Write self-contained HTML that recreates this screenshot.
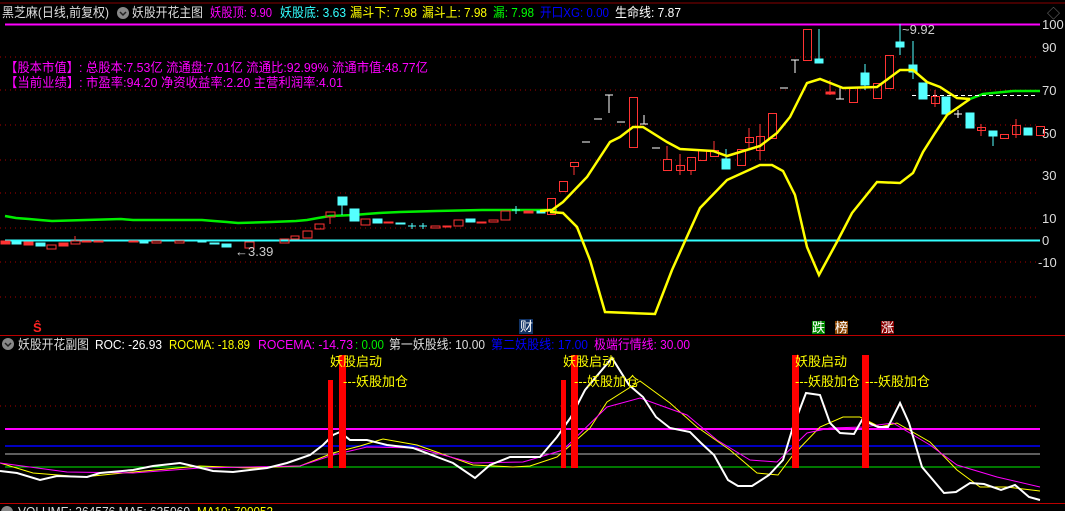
<!DOCTYPE html>
<html><head><meta charset="utf-8"><style>
html,body{margin:0;padding:0;background:#000;width:1065px;height:511px;overflow:hidden}
svg{display:block}
text{font-family:"Liberation Sans","Noto Sans CJK SC",sans-serif;font-size:13px}
</style></head><body>
<svg width="1065" height="511" viewBox="0 0 1065 511" xmlns="http://www.w3.org/2000/svg">
<rect width="1065" height="511" fill="#000"/>
<line x1="0" y1="3" x2="1065" y2="3" stroke="#800" stroke-width="1"/>
<!-- title -->
<text x="2" y="17" fill="#ddd" textLength="107" lengthAdjust="spacingAndGlyphs">黑芝麻(日线,前复权)</text>
<circle cx="123" cy="13" r="6" fill="#888"/><path d="M120 12 l3 3 l3 -3" stroke="#222" stroke-width="1.5" fill="none"/>
<text x="132" y="17" fill="#ddd" textLength="71" lengthAdjust="spacingAndGlyphs">妖股开花主图</text>
<text x="210" y="17" fill="#f0f" textLength="62" lengthAdjust="spacingAndGlyphs">妖股顶: 9.90</text>
<text x="280" y="17" fill="#3ff" textLength="66" lengthAdjust="spacingAndGlyphs">妖股底: 3.63</text>
<text x="350" y="17" fill="#ff0" textLength="67" lengthAdjust="spacingAndGlyphs">漏斗下: 7.98</text>
<text x="422" y="17" fill="#ff0" textLength="65" lengthAdjust="spacingAndGlyphs">漏斗上: 7.98</text>
<text x="493" y="17" fill="#0f0" textLength="41" lengthAdjust="spacingAndGlyphs">漏: 7.98</text>
<text x="540" y="17" fill="#00f" textLength="69" lengthAdjust="spacingAndGlyphs">开口XG: 0.00</text>
<text x="615" y="17" fill="#fff" textLength="66" lengthAdjust="spacingAndGlyphs">生命线: 7.87</text>
<text x="1047" y="18" fill="#777">◇</text>
<!-- gridlines -->
<g stroke="#a00" stroke-dasharray="1,4" stroke-width="1">
<line x1="0" y1="57" x2="1040" y2="57"/><line x1="0" y1="90" x2="1040" y2="90"/>
<line x1="0" y1="125" x2="1040" y2="125"/><line x1="0" y1="160" x2="1040" y2="160"/>
<line x1="0" y1="193" x2="1040" y2="193"/><line x1="0" y1="228" x2="1040" y2="228"/>
<line x1="0" y1="262" x2="1040" y2="262"/><line x1="0" y1="297" x2="1040" y2="297"/>
<line x1="0" y1="406" x2="1040" y2="406"/>
</g>
<line x1="5" y1="24.5" x2="1040" y2="24.5" stroke="#f0f" stroke-width="2"/>
<line x1="5" y1="240.5" x2="1040" y2="240.5" stroke="#3ff" stroke-width="2"/>
<g fill="#ddd">
<text x="1042" y="29">100</text><text x="1042" y="52">90</text><text x="1042" y="95">70</text>
<text x="1042" y="138">50</text><text x="1042" y="180">30</text><text x="1042" y="223">10</text>
<text x="1042" y="245">0</text><text x="1038" y="267">-10</text>
</g>
<!-- info -->
<text x="5" y="72" fill="#f0f" textLength="423" lengthAdjust="spacingAndGlyphs">【股本市值】: 总股本:7.53亿 流通盘:7.01亿 流通比:92.99% 流通市值:48.77亿</text>
<text x="5" y="87" fill="#f0f" textLength="338" lengthAdjust="spacingAndGlyphs">【当前业绩】: 市盈率:94.20 净资收益率:2.20 主营利润率:4.01</text>
<!-- green life line -->
<polyline fill="none" stroke="#0e0" stroke-width="2.5" points="5,216 16,218 29,219 40,220 52,221 86,220 121,219 133,220 202,220 214,221 227,222 238,223 271,222 296,221 307,220 318,218 330,216 354,215 366,214 379,213 400,212 436,211 482,210 536,210 557,210"/>
<polyline fill="none" stroke="#0e0" stroke-width="2.5" points="970,99 983,94 1013,91 1040,91"/>
<line x1="912" y1="95.5" x2="1038" y2="95.5" stroke="#fff" stroke-dasharray="4,3"/>
<!-- candles -->
<g stroke-width="1">
<g fill="#f33" stroke="#f33">
<rect x="1" y="241" width="9" height="3"/><rect x="24" y="242" width="9" height="3"/><rect x="59" y="243" width="9" height="3"/>
<rect x="82" y="241" width="9" height="1"/><rect x="94" y="241" width="9" height="1"/><rect x="129" y="241" width="9" height="1"/>
<rect x="384" y="222" width="9" height="1"/><rect x="443" y="226" width="8" height="1"/><rect x="477" y="222" width="9" height="1"/>
<rect x="524" y="211" width="9" height="2"/><rect x="826" y="92" width="9" height="2"/><line x1="830" y1="80" x2="830" y2="95"/>
</g>
<g fill="none" stroke="#f33">
<rect x="47" y="245" width="9" height="4"/><rect x="71" y="241" width="9" height="3"/><line x1="75" y1="236" x2="75" y2="241"/>
<rect x="152" y="241" width="9" height="2"/><rect x="175" y="241" width="9" height="2"/><rect x="245" y="242" width="9" height="6"/>
<rect x="280" y="239" width="9" height="4"/><rect x="291" y="236" width="8" height="3"/><rect x="303" y="231" width="9" height="7"/>
<rect x="315" y="224" width="9" height="5"/><rect x="326" y="212" width="9" height="5"/><line x1="330" y1="217" x2="330" y2="224"/>
<rect x="361" y="219" width="9" height="6"/><rect x="431" y="226" width="9" height="2"/><rect x="454" y="220" width="9" height="6"/>
<rect x="489" y="220" width="9" height="2"/><rect x="501" y="211" width="9" height="9"/>
<rect x="547.5" y="198.5" width="8" height="16"/><rect x="559.5" y="181.5" width="8" height="10"/><rect x="570.5" y="162.5" width="8" height="4"/><line x1="574" y1="166" x2="574" y2="175"/>
<rect x="629.5" y="97.5" width="8" height="50"/>
<rect x="663.5" y="159.5" width="8" height="11"/><line x1="667" y1="146" x2="667" y2="159"/>
<rect x="676.5" y="165.5" width="8" height="5"/><line x1="680" y1="154" x2="680" y2="175"/>
<rect x="687.5" y="157.5" width="8" height="13"/><line x1="691" y1="170" x2="691" y2="175"/>
<rect x="698.5" y="150.5" width="8" height="10"/><rect x="710.5" y="150.5" width="8" height="6"/><line x1="714" y1="141" x2="714" y2="150"/>
<rect x="737.5" y="149.5" width="8" height="16"/><rect x="745.5" y="137.5" width="8" height="5"/><line x1="749" y1="128" x2="749" y2="148"/>
<rect x="756.5" y="136.5" width="8" height="14"/><line x1="760" y1="124" x2="760" y2="160"/>
<rect x="768.5" y="113.5" width="8" height="25"/>
<rect x="803.5" y="29.5" width="8" height="31"/>
<rect x="849.5" y="87.5" width="8" height="15"/>
<rect x="873.5" y="83.5" width="8" height="15"/><rect x="885.5" y="55.5" width="8" height="33"/>
<rect x="931.5" y="96.5" width="8" height="7"/><line x1="935" y1="90" x2="935" y2="107"/>
<rect x="977.5" y="127.5" width="8" height="3"/><line x1="981" y1="124" x2="981" y2="136"/>
<rect x="1000.5" y="134.5" width="8" height="4"/>
<rect x="1012.5" y="125.5" width="8" height="9"/><line x1="1016" y1="119" x2="1016" y2="138"/>
<rect x="1036.5" y="126.5" width="8" height="9"/>
</g>
<g fill="#5ff" stroke="#5ff">
<rect x="12" y="242" width="9" height="2"/><rect x="36" y="243" width="9" height="3"/><rect x="140" y="242" width="8" height="1"/>
<rect x="198" y="241" width="8" height="1"/><rect x="210" y="243" width="9" height="1"/><rect x="222" y="244" width="9" height="3"/>
<rect x="338" y="197" width="9" height="8"/><line x1="342" y1="205" x2="342" y2="215"/>
<rect x="350" y="209" width="9" height="12"/><rect x="373" y="219" width="9" height="4"/><rect x="396" y="223" width="9" height="1"/>
<line x1="408" y1="226" x2="416" y2="226"/><line x1="412" y1="223" x2="412" y2="229"/>
<line x1="419" y1="226" x2="427" y2="226"/><line x1="423" y1="223" x2="423" y2="229"/>
<rect x="466" y="219" width="9" height="3"/><line x1="512" y1="210" x2="520" y2="210"/><line x1="516" y1="206" x2="516" y2="214"/>
<rect x="537" y="211" width="8" height="2"/>
<rect x="722" y="159" width="8" height="10"/><line x1="726" y1="149" x2="726" y2="159"/>
<rect x="815" y="59" width="8" height="4"/><line x1="819" y1="29" x2="819" y2="63"/>
<rect x="861" y="73" width="8" height="12"/><line x1="865" y1="64" x2="865" y2="90"/>
<rect x="896" y="42" width="8" height="5"/><line x1="900" y1="24" x2="900" y2="55"/>
<rect x="909" y="65" width="8" height="7"/><line x1="913" y1="41" x2="913" y2="79"/>
<rect x="919" y="83" width="8" height="16"/>
<rect x="942" y="97" width="8" height="17"/>
<rect x="966" y="113" width="8" height="15"/>
<rect x="989" y="131" width="8" height="5"/><line x1="993" y1="131" x2="993" y2="146"/>
<rect x="1024" y="128" width="8" height="7"/>
</g>
<g stroke="#fff" fill="none">
<line x1="582" y1="142" x2="590" y2="142"/><line x1="594" y1="119" x2="602" y2="119"/><line x1="617" y1="122" x2="625" y2="122"/>
<line x1="605" y1="95" x2="613" y2="95"/><line x1="609" y1="95" x2="609" y2="113"/>
<line x1="640" y1="124" x2="648" y2="124"/><line x1="644" y1="115" x2="644" y2="124"/>
<line x1="652" y1="148" x2="660" y2="148"/><line x1="780" y1="88" x2="788" y2="88"/>
<line x1="791" y1="60" x2="799" y2="60"/><line x1="795" y1="60" x2="795" y2="73"/>
<line x1="836" y1="99" x2="844" y2="99"/><line x1="840" y1="88" x2="840" y2="99"/>
<line x1="954" y1="114" x2="962" y2="114"/><line x1="958" y1="110" x2="958" y2="118"/>
</g>
</g>
<text x="235" y="256" fill="#ccc" font-size="12">←3.39</text>
<text x="902" y="34" fill="#ccc" font-size="12">~9.92</text>
<polyline fill="none" stroke="#ff0" stroke-width="2.5" points="540,211 552,210 563,202 587,177 610,142 620,137 633,127 643,127 667,142 680,149 713,151 727,156 760,146 777,133 790,117 800,97 807,83 820,79 843,88 877,87 900,70 913,70 927,82 940,87 957,98 970,99"/>
<polyline fill="none" stroke="#ff0" stroke-width="2.5" points="550,212 563,213 577,227 590,260 605,312 655,314 672,270 690,230 700,208 727,180 760,165 772,165 783,171 795,195 807,247 819,275 838,240 852,213 877,182 900,183 913,173 923,152 935,133 947,115 960,106 970,99"/>
<text x="33" y="332" fill="#f22" font-size="12" font-weight="bold">Ŝ</text>
<rect x="519" y="319" width="14" height="15" fill="#136"/><text x="520" y="331" fill="#fff" font-size="12">财</text>
<rect x="812" y="321" width="13" height="13" fill="#080"/><text x="812" y="332" fill="#fff" font-size="12">跌</text>
<rect x="835" y="321" width="13" height="13" fill="#840"/><text x="835" y="332" fill="#fff" font-size="12">榜</text>
<rect x="881" y="321" width="13" height="13" fill="#800"/><text x="881" y="332" fill="#fff" font-size="12">涨</text>
<line x1="0" y1="335.5" x2="1065" y2="335.5" stroke="#b00"/>
<!-- sub title -->
<circle cx="8" cy="344" r="6" fill="#888"/><path d="M5 343 l3 3 l3 -3" stroke="#222" stroke-width="1.5" fill="none"/>
<text x="18" y="349" fill="#ddd" textLength="71" lengthAdjust="spacingAndGlyphs">妖股开花副图</text>
<text x="95" y="349" fill="#fff" textLength="67" lengthAdjust="spacingAndGlyphs">ROC: -26.93</text>
<text x="169" y="349" fill="#ff0" textLength="81" lengthAdjust="spacingAndGlyphs">ROCMA: -18.89</text>
<text x="258" y="349" fill="#f0f" textLength="95" lengthAdjust="spacingAndGlyphs">ROCEMA: -14.73</text>
<text x="355" y="349" fill="#0e0" textLength="29" lengthAdjust="spacingAndGlyphs">: 0.00</text>
<text x="389" y="349" fill="#ddd" textLength="96" lengthAdjust="spacingAndGlyphs">第一妖股线: 10.00</text>
<text x="491" y="349" fill="#00f" textLength="97" lengthAdjust="spacingAndGlyphs">第二妖股线: 17.00</text>
<text x="594" y="349" fill="#f0f" textLength="96" lengthAdjust="spacingAndGlyphs">极端行情线: 30.00</text>
<line x1="5" y1="429" x2="1040" y2="429" stroke="#f0f" stroke-width="2"/>
<line x1="5" y1="446" x2="1040" y2="446" stroke="#00f" stroke-width="1.5"/>
<line x1="5" y1="454" x2="1040" y2="454" stroke="#bbb" stroke-width="1"/>
<line x1="5" y1="467" x2="1040" y2="467" stroke="#0e0" stroke-width="1"/>
<polyline fill="none" stroke="#ff0" stroke-width="1" points="0,463 33,473 83,477 133,472 200,466 250,468 300,466 333,453 360,446 383,439 417,445 473,465 513,467 530,466 557,457 590,428 607,402 640,381 670,403 697,427 730,450 757,473 778,475 793,455 820,427 843,417 860,417 880,427 897,423 930,442 957,470 980,487 1007,487 1040,491"/>
<polyline fill="none" stroke="#f0f" stroke-width="1" points="0,463 67,472 133,473 200,468 300,466 333,455 367,447 417,448 473,463 523,462 530,460 563,450 607,407 640,398 687,415 717,440 750,460 777,462 807,433 830,428 863,427 893,423 930,445 957,465 997,477 1040,487"/>
<polyline fill="none" stroke="#fff" stroke-width="2" points="0,471 17,473 40,480 57,476 87,477 100,473 133,470 153,466 180,463 193,466 213,471 233,472 267,468 287,463 310,455 323,445 333,435 340,432 350,440 367,440 387,445 413,448 453,463 475,478 490,465 510,457 530,457 540,457 557,437 571,417 585,390 612,358 629,385 643,397 656,417 670,428 690,432 701,443 714,455 728,480 738,486 752,486 769,475 783,460 793,427 806,393 820,395 830,423 840,433 854,434 862,420 878,427 888,427 900,403 909,423 922,467 944,493 956,492 970,483 984,484 1001,490 1015,485 1029,497 1040,500"/>
<g fill="#f00">
<rect x="328" y="380" width="5" height="88"/><rect x="339" y="355" width="7" height="113"/>
<rect x="561" y="380" width="5" height="88"/><rect x="571" y="355" width="7" height="113"/>
<rect x="792" y="355" width="7" height="113"/><rect x="862" y="355" width="7" height="113"/>
</g>
<g fill="#ff0">
<text x="330" y="366">妖股启动</text><text x="343" y="386">---妖股加仓</text>
<text x="563" y="366">妖股启动</text><text x="574" y="386">---妖股加仓</text>
<text x="795" y="366">妖股启动</text><text x="795" y="386">---妖股加仓</text>
<text x="865" y="386">---妖股加仓</text>
</g>
<line x1="0" y1="503.5" x2="1065" y2="503.5" stroke="#b00"/>
<circle cx="7" cy="512" r="6" fill="#888"/>
<text x="18" y="516" fill="#ddd" textLength="172" lengthAdjust="spacingAndGlyphs">VOLUME: 264576 MA5: 635060</text>
<text x="197" y="516" fill="#ff0" textLength="76" lengthAdjust="spacingAndGlyphs">MA10: 700052</text>
</svg>
</body></html>
